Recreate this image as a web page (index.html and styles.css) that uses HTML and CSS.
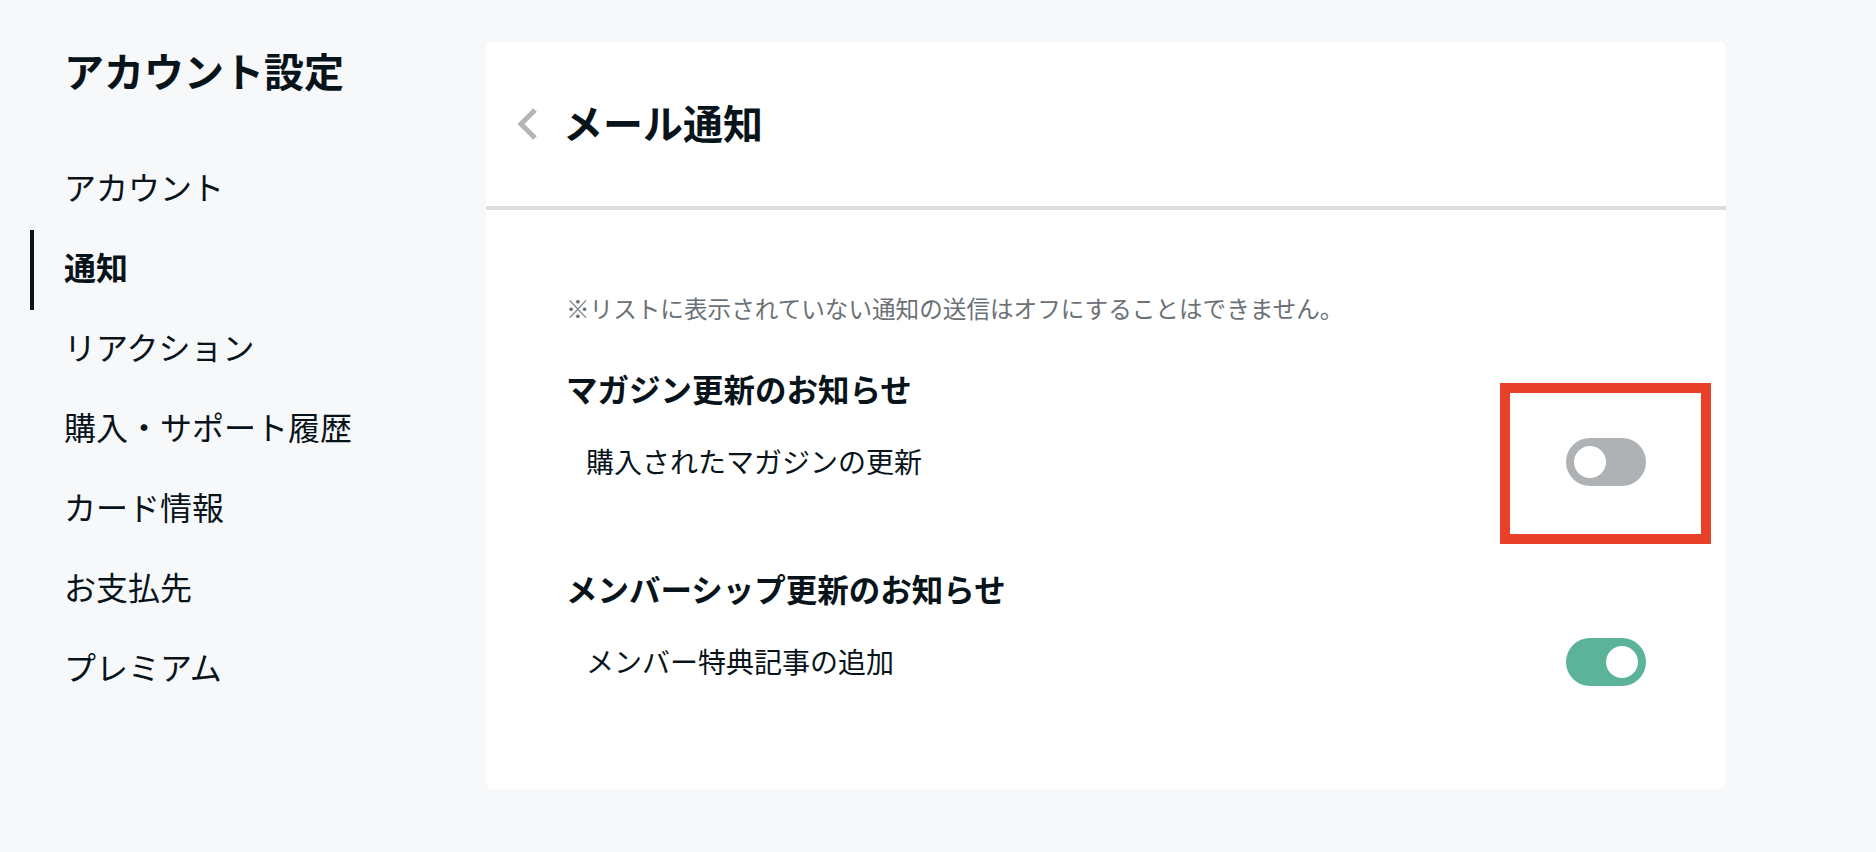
FILE: index.html
```html
<!DOCTYPE html>
<html lang="ja">
<head>
<meta charset="utf-8">
<title>メール通知</title>
<link rel="stylesheet" href="styles.css">
</head>
<body>
<div class="page">
  <aside class="sidebar">
    <h1 class="sidebar-title">アカウント設定</h1>
    <nav class="nav">
      <a class="nav-item">アカウント</a>
      <a class="nav-item active">通知</a>
      <a class="nav-item">リアクション</a>
      <a class="nav-item">購入・サポート履歴</a>
      <a class="nav-item">カード情報</a>
      <a class="nav-item">お支払先</a>
      <a class="nav-item">プレミアム</a>
    </nav>
  </aside>
  <main class="card">
    <header class="card-header">
      <svg class="back" width="24" height="36" viewBox="0 0 24 36"><path d="M20 4 L6 18 L20 32" fill="none" stroke="#b3b5b8" stroke-width="5"/></svg>
      <h2 class="card-title">メール通知</h2>
    </header>
    <section class="card-body">
      <p class="note">※リストに表示されていない通知の送信はオフにすることはできません。</p>
      <h3 class="group-title">マガジン更新のお知らせ</h3>
      <div class="row">
        <span class="row-label">購入されたマガジンの更新</span>
        <div class="toggle-wrap">
          <span class="toggle off"><span class="knob"></span></span>
          <span class="highlight"></span>
        </div>
      </div>
      <h3 class="group-title second">メンバーシップ更新のお知らせ</h3>
      <div class="row">
        <span class="row-label">メンバー特典記事の追加</span>
        <div class="toggle-wrap">
          <span class="toggle on"><span class="knob"></span></span>
        </div>
      </div>
    </section>
  </main>
</div>
</body>
</html>
```

FILE: styles.css
```css
html, body {
  margin: 0;
  padding: 0;
}
body {
  background: #f7f8fa;
  color: #08131a;
  font-family: "Noto Sans CJK JP", "Noto Sans", sans-serif;
  width: 1876px;
  height: 852px;
  overflow: hidden;
}
.page {
  display: flex;
  padding-top: 42px;
}
.sidebar {
  width: 456px;
  padding-left: 30px;
  flex-shrink: 0;
}
.sidebar-title {
  margin: 4px 0 0 0;
  padding-left: 34px;
  font-size: 40px;
  line-height: 48px;
  font-weight: 700;
}
.nav {
  display: flex;
  flex-direction: column;
  margin-top: 56px;
}
.nav-item {
  display: block;
  height: 80px;
  line-height: 73px;
  font-size: 32px;
  padding-left: 30px;
  border-left: 4px solid transparent;
  color: #08131a;
}
.nav-item.active {
  border-left-color: #08131a;
  font-weight: 700;
}
.card {
  width: 1240px;
  height: 747px;
  background: #fff;
  border-radius: 6px;
  box-sizing: border-box;
}
.card-header {
  height: 164px;
  display: flex;
  align-items: center;
  padding-left: 29px;
  border-bottom: 4px solid #dddee0;
}
.back {
  display: block;
  margin-right: 24px;
}
.card-title {
  margin: 0 0 4px 0;
  font-size: 40px;
  line-height: 48px;
  font-weight: 700;
}
.card-body {
  padding: 80px 80px 0 80px;
}
.note {
  margin: 0;
  font-size: 23.6px;
  line-height: 36px;
  color: #6b7176;
}
.group-title {
  margin: 38px 0 0 0;
  font-size: 31.5px;
  line-height: 48px;
  font-weight: 700;
}
.group-title.second {
  margin-top: 78px;
}
.row {
  display: flex;
  align-items: center;
  justify-content: space-between;
  margin-top: 26px;
  height: 48px;
}
.row-label {
  padding-left: 20px;
  font-size: 28px;
  line-height: 46px;
  padding-bottom: 2px;
}
.toggle-wrap {
  position: relative;
  width: 80px;
  height: 48px;
}
.toggle {
  display: flex;
  align-items: center;
  width: 80px;
  height: 48px;
  border-radius: 24px;
  padding: 0 8px;
  box-sizing: border-box;
}
.toggle.off {
  background: #afb2b5;
  justify-content: flex-start;
}
.toggle.on {
  background: #5bb39a;
  justify-content: flex-end;
}
.knob {
  width: 32px;
  height: 32px;
  border-radius: 50%;
  background: #fff;
}
.highlight {
  position: absolute;
  left: -66px;
  top: -55px;
  width: 211px;
  height: 161px;
  border: 10px solid #e94129;
  box-sizing: border-box;
}
```
